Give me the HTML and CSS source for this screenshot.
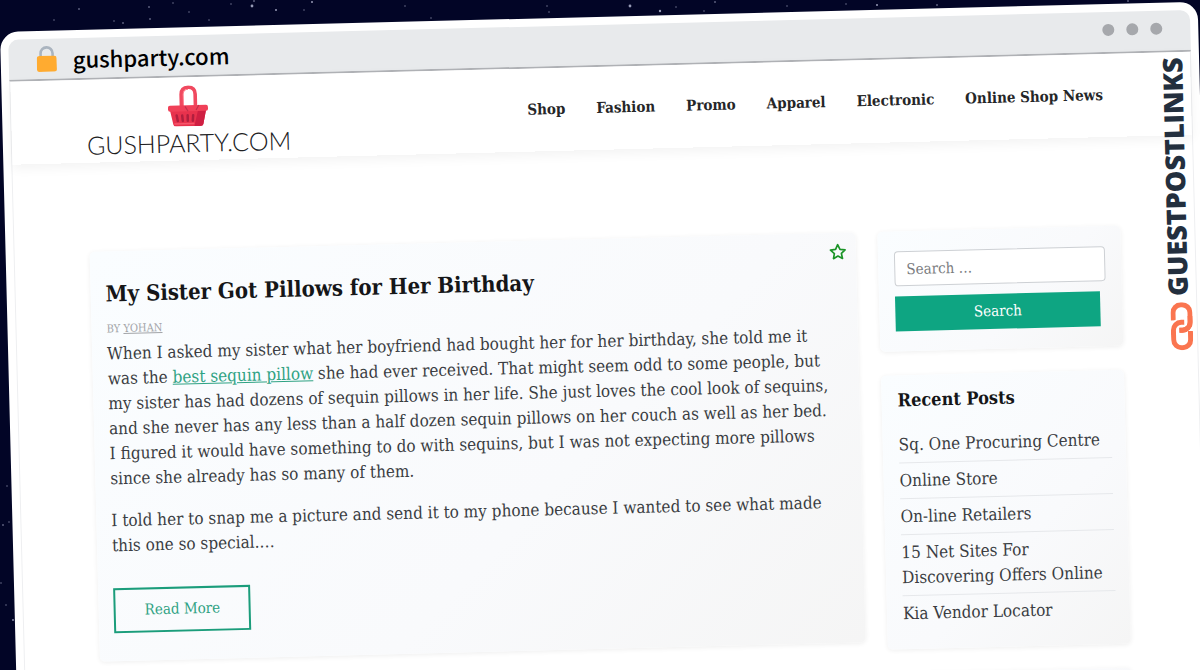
FILE: index.html
```html
<!DOCTYPE html>
<html lang="en">
<head>
<meta charset="utf-8">
<title>gushparty.com</title>
<link rel="stylesheet" href="styles.css">
</head>
<body>
<svg class="stars" width="1200" height="670" fill="#c9cde6" aria-hidden="true">
  <g opacity=".75"><circle cx="79" cy="9" r=".8"/><circle cx="123" cy="23" r=".8"/><circle cx="150" cy="19" r=".8"/><circle cx="149" cy="7" r=".8"/><circle cx="252" cy="6" r="1.400"/><circle cx="254" cy="1" r=".8"/><circle cx="276" cy="10" r="1"/><circle cx="312" cy="2" r="1"/><circle cx="630" cy="6" r="1.400"/><circle cx="660" cy="11" r="1.200"/><circle cx="715" cy="2" r=".8"/><circle cx="877" cy="5" r="1"/><circle cx="937" cy="5" r=".8"/><circle cx="1128" cy="1" r=".8"/><circle cx="13" cy="620" r=".9"/><circle cx="3" cy="525" r=".8"/></g>
  <g opacity=".3"><circle cx="54" cy="20" r="1"/><circle cx="114" cy="21" r="1"/><circle cx="173" cy="3" r="1"/><circle cx="189" cy="12" r="1"/><circle cx="231" cy="4" r="1"/><circle cx="209" cy="20" r="1"/><circle cx="304" cy="10" r="1"/><circle cx="405" cy="6" r="1"/><circle cx="431" cy="18" r="1"/><circle cx="549" cy="12" r="1"/><circle cx="547" cy="6" r="1"/><circle cx="676" cy="7" r="1"/><circle cx="704" cy="11" r="1"/><circle cx="787" cy="6" r="1"/><circle cx="846" cy="4" r="1"/><circle cx="7" cy="486" r="1"/><circle cx="9" cy="522" r="1"/><circle cx="1" cy="583" r="1"/><circle cx="6" cy="605" r="1"/></g>
</svg>
<div class="browser">
  <div class="titlebar">
    <svg class="lock" viewBox="0 0 20 26" aria-hidden="true"><path d="M4 12V7.500a6 6 0 0 1 12 0V12" fill="none" stroke="#aab4bf" stroke-width="2.600"/><rect y="10" width="20" height="16" rx="2.500" fill="#ffab30"/></svg>
    <span class="address">gushparty.com</span>
    <span class="dots"><i></i><i></i><i></i></span>
  </div>
  <div class="page">
    <header class="header">
      <a class="logo" href="#">
        <svg class="basket" viewBox="0 0 40 41" aria-hidden="true">
          <path d="M13.500 22V9q0-7 7-7t7 7v13" fill="none" stroke="#f0495f" stroke-width="3.600"/>
          <path d="M15.500 21V9q0-5 5-5" fill="none" stroke="#ff7584" stroke-width="1"/>
          <path d="M2 25h36l-3 14q-.5 2-3 2H8q-2.500 0-3-2z" fill="#e8324d"/>
          <path d="M30 25h8l-3 14q-.5 2-3 2h-6z" fill="#cf1f42"/>
          <rect y="20" width="40" height="6" rx="2" fill="#f04058"/>
          <path d="M17 21l3 5M31 20l-3 5" stroke="#c2304a" stroke-width="1.200"/>
          <path d="M8.500 30l1 5.500M14 30l.5 5.500M19.500 30v5.500M25 30l-.5 5.500" stroke="#b01f3e" stroke-width="2.500" stroke-linecap="round"/>
          <path d="M6 38.500h20" stroke="#f6566b" stroke-width="1.500"/>
        </svg>
        <span class="wordmark">GUSHPARTY.COM</span>
      </a>
      <nav class="nav">
        <a href="#">Shop</a><a href="#">Fashion</a><a href="#">Promo</a><a href="#">Apparel</a><a href="#">Electronic</a><a href="#">Online Shop News</a>
      </nav>
    </header>
    <div class="layout">
      <main>
        <article class="card post">
          <svg class="star" viewBox="0 0 18 18" aria-hidden="true"><path d="M9 1.800l2.200 4.700 5.100.6-3.800 3.500 1 5.100L9 13.200l-4.500 2.500 1-5.100L1.700 7.100l5.100-.6z" fill="none" stroke="#1c9428" stroke-width="1.700" stroke-linejoin="round"/></svg>
          <h1>My Sister Got Pillows for Her Birthday</h1>
          <div class="byline">BY <a href="#">YOHAN</a></div>
          <p>When I asked my sister what her boyfriend had bought her for her birthday, she told me it was the <a href="#">best sequin pillow</a> she had ever received. That might seem odd to some people, but my sister has had dozens of sequin pillows in her life. She just loves the cool look of sequins, and she never has any less than a half dozen sequin pillows on her couch as well as her bed. I figured it would have something to do with sequins, but I was not expecting more pillows since she already has so many of them.</p>
          <p>I told her to snap me a picture and send it to my phone because I wanted to see what made this one so special.…</p>
          <a class="more" href="#">Read More</a>
        </article>
      </main>
      <aside class="sidebar">
        <form class="card search">
          <input type="search" placeholder="Search …" aria-label="Search">
          <button type="button">Search</button>
        </form>
        <section class="card recent">
          <h2>Recent Posts</h2>
          <ul>
            <li><a href="#">Sq. One Procuring Centre</a></li>
            <li><a href="#">Online Store</a></li>
            <li><a href="#">On-line Retailers</a></li>
            <li><a href="#">15 Net Sites For Discovering Offers Online</a></li>
            <li><a href="#">Kia Vendor Locator</a></li>
          </ul>
        </section>
        <section class="card blank"></section>
      </aside>
    </div>
  </div>
  <div class="brand">
    <svg class="chain" viewBox="0 0 22 48" fill="none" stroke="#fa7550" stroke-width="5" aria-hidden="true">
      <path d="M2.500 18V10.500a8 8 0 0 1 8-8h1a8 8 0 0 1 8 8V20a8 8 0 0 1-8 8h-3"/>
      <path d="M16 20h-5.500a8 8 0 0 0-8 8v6" stroke="#fff" stroke-width="8"/>
      <path d="M19.500 14V20a8 8 0 0 1-8 8h-3"/>
      <path d="M19.500 29v8.500a8 8 0 0 1-8 8h-1a8 8 0 0 1-8-8V28a8 8 0 0 1 8-8h3"/>
    </svg>
    <span class="brand-name">GUESTPOSTLINKS</span>
  </div>
</div>
</body>
</html>
```
FILE: styles.css
```css
* { box-sizing: border-box; }
html { height: 100%; }
body {
  margin: 0;
  height: 100%;
  overflow: hidden;
  background: #020526;
  color: #3a3d42;
  font: 17px/25px "DejaVu Serif Condensed", "DejaVu Serif", serif;
}
a { color: inherit; }
.stars { position: absolute; top: 0; left: 0; }

.browser {
  position: relative;
  width: calc(100% - 2px);
  min-height: calc(100% + 40px);
  margin-top: 32px;
  padding: 8px;
  border-radius: 18px;
  background: #fff;
  transform: rotate(-1.45deg);
  transform-origin: 0 0;
}
.titlebar {
  display: flex;
  align-items: center;
  height: 42px;
  padding: 0 28px;
  border-bottom: 2px solid #b1b3b7;
  border-radius: 10px 10px 0 0;
  background: #e8eaec;
}
.lock { width: 20px; height: 26px; }
.address {
  margin-left: 16px;
  color: #000;
  font: 500 22px/30px "Noto Sans CJK SC", "Noto Sans", sans-serif;
}
.dots { display: flex; gap: 12px; margin-left: auto; padding-bottom: 4px; }
.dots i { width: 12px; height: 12px; border-radius: 50%; background: #a6a8ac; }

.page { border: solid #eeeff1; border-width: 0 1px; min-height: 640px; }
.header {
  display: flex;
  align-items: center;
  justify-content: space-between;
  height: 83px;
  padding: 0 88px 0 75px;
  box-shadow: 0 4px 12px rgba(0, 0, 0, .05);
}
.logo {
  display: flex;
  flex-direction: column;
  align-items: center;
  padding-top: 6px;
  color: #202022;
  text-decoration: none;
}
.basket { width: 40px; height: 41px; }
.wordmark { font: 300 25px/32px Lato, sans-serif; }
.nav { display: flex; gap: 31px; color: #252628; font-size: 15px; font-weight: bold; }
.nav a { text-decoration: none; white-space: nowrap; }

.layout {
  display: grid;
  grid-template-columns: minmax(0, 1fr) 243px;
  gap: 22px;
  align-items: start;
  padding: 89px 74px 0 75px;
}
.card {
  border-radius: 5px;
  background: linear-gradient(135deg, #fafdff, #f9fafc 60%, #f5f5f5);
  box-shadow: 0 1px 5px rgba(0, 0, 0, .07);
}
.post { position: relative; padding: 26px 26px 28px 15px; }
.star { position: absolute; top: 10px; right: 9px; width: 18px; height: 18px; }
h1, h2, p, ul { margin: 0; padding: 0; }
h1 { color: #151618; font-size: 22px; line-height: 32px; }
.byline { margin-top: 10px; margin-bottom: 2px; color: #a2a4a8; font-size: 11px; line-height: 20px; }
.post p + p { margin-top: 17px; }
.post p a { color: #2fa283; }
.more {
  display: inline-block;
  margin-top: 30px;
  padding: 8px 29px;
  border: 2px solid #1b9d7b;
  color: #2fa283;
  font-size: 15px;
  text-decoration: none;
}

.sidebar { display: grid; gap: 24px; }
.search { display: grid; gap: 10px; padding: 20px 16px; }
.search input {
  width: 100%;
  height: 35px;
  padding: 0 11px;
  border: 1px solid #cdd0d4;
  border-radius: 4px;
  background: #fff;
  font: inherit;
  font-size: 15px;
}
.search input::placeholder { color: #7a7c80; opacity: 1; }
.search button {
  height: 35px;
  margin-right: 6px;
  border: 0;
  background: #0ea582;
  color: #fff;
  font: inherit;
  font-size: 15px;
}
.recent { padding: 12px 14px 18px 16px; }
h2 { margin-bottom: 15px; color: #151618; font-size: 18px; }
ul { list-style: none; }
li { padding: 5px 0; }
li + li { border-top: 1px solid #e6e8eb; }
li a { text-decoration: none; }
.blank { min-height: 120px; }

.brand {
  position: absolute;
  top: 55px;
  right: 13px;
  display: flex;
  flex-direction: column-reverse;
  align-items: flex-end;
  gap: 6px;
}
.brand-name {
  padding-left: 3px;
  color: #232f3e;
  font: 800 27px/22px "Open Sans", sans-serif;
  writing-mode: vertical-rl;
  transform: rotate(180deg);
}
.chain { width: 22px; height: 48px; }
```
